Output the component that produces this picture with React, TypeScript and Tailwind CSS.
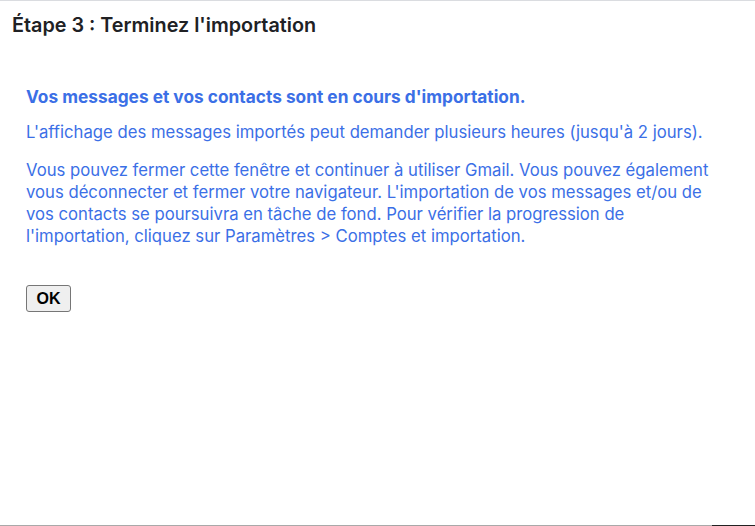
export default function App() {
  return (
    <div className="flex h-[526px] w-full flex-col border-t border-[#dadce0] bg-white font-['Inter',sans-serif]">
      <h1 className="px-3 pt-3 text-[19.8px] font-semibold leading-6 text-[#202124]">
        Étape 3 : Terminez l'importation
      </h1>
      <div className="mt-[49px] pl-[26px] pr-[30px] text-[16.7px] leading-[22px] text-[#3b6fe6]">
        <p className="text-[17.3px] font-bold">Vos messages et vos contacts sont en cours d'importation.</p>
        <p className="mt-[13px]">
          L'affichage des messages importés peut demander plusieurs heures (jusqu'à 2 jours).
        </p>
        <p className="mt-[16px]">
          Vous pouvez fermer cette fenêtre et continuer à utiliser Gmail. Vous pouvez également vous
          déconnecter et fermer votre navigateur. L'importation de vos messages et/ou de vos contacts
          se poursuivra en tâche de fond. Pour vérifier la progression de l'importation, cliquez sur
          Paramètres &gt; Comptes et importation.
        </p>
        <button className="mt-[38px] flex h-[27px] w-[45px] items-center justify-center rounded-[3px] border border-[#767676] bg-[#efefef] font-['Liberation_Sans',sans-serif] text-[16px] font-bold text-black">
          OK
        </button>
      </div>
      <div className="mt-auto flex h-px">
        <div className="flex-1 bg-[#a9a9a9]" />
        <div className="w-[43px] bg-[#222]" />
      </div>
    </div>
  );
}
